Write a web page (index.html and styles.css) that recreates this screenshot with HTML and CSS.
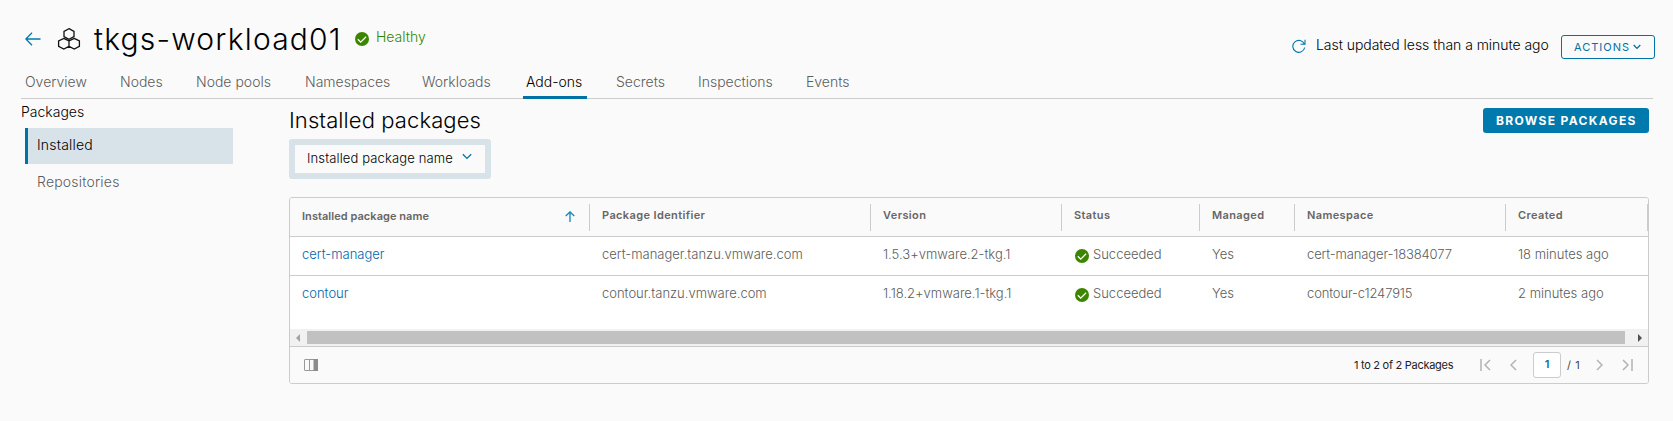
FILE: index.html
```html
<!DOCTYPE html>
<html lang="en">
<head>
<meta charset="utf-8">
<title>tkgs-workload01</title>
<link rel="stylesheet" href="styles.css">
</head>
<body>
<svg width="0" height="0" class="defs">
  <symbol id="ok" viewBox="0 0 14 14"><circle cx="7" cy="7" r="7" fill="#3c8500"/><path d="M2.8 7.3l2.900 2.800 5.400-5.300" fill="none" stroke="#fff" stroke-width="1.3"/></symbol>
</svg>
<header class="header">
  <svg class="back" width="16" height="14" viewBox="0 0 16 14"><path d="M15.500 7H1M7 .8L.9 7 7 13.200" /></svg>
  <svg class="cluster" width="24" height="24" viewBox="0 0 24 24"><path d="M12 1.700l5 2.600v5.400l-5 2.600-5-2.600V4.300z M6.800 11.400l5.200 2.600v5.400l-5.200 2.600-5.200-2.600V14z M17.200 11.400l5.200 2.600v5.400l-5.200 2.600-5.200-2.600V14z"/></svg>
  <h1 class="title">tkgs-workload01</h1>
  <svg class="health-icon" width="14" height="14"><use href="#ok"/></svg>
  <span class="health">Healthy</span>
  <div class="header-right">
    <svg class="refresh" width="14" height="14" viewBox="0 0 14 14"><path d="M12.400 5.200A6 6 0 1 0 12.700 8.500M13 .7v4.500H8.500"/></svg>
    <span class="updated">Last updated less than a minute ago</span>
    <button class="actions"><span>ACTIONS</span><svg width="8" height="6" viewBox="0 0 8 6"><path d="M.7 1L4 4.400 7.300 1"/></svg></button>
  </div>
</header>
<nav class="tabs">
  <a class="t1">Overview</a><a class="t2">Nodes</a><a class="t3">Node pools</a><a class="t4">Namespaces</a><a class="t5">Workloads</a><a class="t6 active">Add-ons</a><a class="t7">Secrets</a><a class="t8">Inspections</a><a class="t9">Events</a>
</nav>
<div class="content">
  <aside class="side">
    <div class="side-title">Packages</div>
    <a class="side-link current">Installed</a>
    <a class="side-link repos">Repositories</a>
  </aside>
  <main class="main">
    <div class="main-top">
      <div>
        <h2 class="subtitle">Installed packages</h2>
        <div class="filter"><span>Installed package name</span><svg width="10" height="7" viewBox="0 0 10 7"><path d="M.8 1.200L5 5.400 9.200 1.200"/></svg></div>
      </div>
      <button class="browse">BROWSE PACKAGES</button>
    </div>
    <section class="grid">
      <div class="row head">
        <div class="sorted"><span>Installed package name</span><svg width="10" height="11" viewBox="0 0 10 11"><path d="M5 11V1M.7 5L5 .9 9.300 5"/></svg></div>
        <div>Package Identifier</div><div>Version</div><div>Status</div><div>Managed</div><div>Namespace</div><div>Created</div>
      </div>
      <div class="row">
        <div><a class="link">cert-manager</a></div><div>cert-manager.tanzu.vmware.com</div><div class="version">1.5.3+vmware.2-tkg.1</div><div class="status"><svg width="14" height="14"><use href="#ok"/></svg>Succeeded</div><div>Yes</div><div class="ns">cert-manager-18384077</div><div>18 minutes ago</div>
      </div>
      <div class="row last">
        <div><a class="link">contour</a></div><div>contour.tanzu.vmware.com</div><div class="version">1.18.2+vmware.1-tkg.1</div><div class="status"><svg width="14" height="14"><use href="#ok"/></svg>Succeeded</div><div>Yes</div><div class="ns">contour-c1247915</div><div>2 minutes ago</div>
      </div>
      <div class="scroll">
        <svg width="17" height="17" viewBox="0 0 17 17"><path d="M10 5v8L6 9z" fill="#a3a3a3"/></svg>
        <div class="thumb"></div>
        <svg width="23" height="17" viewBox="0 0 23 17"><path d="M13 5v8l4-4z" fill="#505050"/></svg>
      </div>
      <footer class="foot">
        <svg class="cols" width="14" height="12" viewBox="0 0 14 12"><rect x=".5" y=".5" width="13" height="11" rx=".5" fill="#fafafa" stroke="#999"/><path d="M5.500 0v12" stroke="#999"/><path d="M9.500 0H14v12H9.500z" fill="#8c8c8c"/></svg>
        <span class="count">1 to 2 of 2 Packages</span>
        <svg class="first" width="11" height="12" viewBox="0 0 11 12"><path d="M1 0v12M10 1L5 6l5 5"/></svg>
        <svg class="prev" width="7" height="12" viewBox="0 0 7 12"><path d="M6 1L1 6l5 5"/></svg>
        <span class="page">1</span>
        <span class="pages">/ 1</span>
        <svg class="next" width="7" height="12" viewBox="0 0 7 12"><path d="M1 1l5 5-5 5"/></svg>
        <svg class="end" width="11" height="12" viewBox="0 0 11 12"><path d="M10 0v12M1 1l5 5-5 5"/></svg>
      </footer>
    </section>
  </main>
</div>
</body>
</html>
```
FILE: styles.css
```css
* { box-sizing: border-box; }
body { margin: 0; height: 421px; overflow: hidden; background: #fafafa; color: #000; font-family: Inter, "Open Sans", sans-serif; font-size: 14px; font-weight: 300; }
svg { display: block; flex: none; fill: none; }
.defs { position: absolute; }
h1, h2 { margin: 0; font-weight: 300; }
button { font-family: inherit; white-space: nowrap; }
.header { display: flex; height: 68px; padding: 0 18px 0 25px; white-space: nowrap; }
.back { margin-top: 32px; stroke: #0079ad; stroke-width: 1.3; }
.cluster { margin: 27px 0 0 16px; stroke: #111; stroke-width: 1.3; }
.title { width: 261px; margin: 19px 0 0 13px; font-size: 30px; line-height: 40px; letter-spacing: 1.2px; }
.health-icon { margin-top: 32px; }
.health { margin: 27px 0 0 7px; line-height: 20px; color: #318700; }
.header-right { display: flex; margin-left: auto; }
.refresh { margin: 39px 10px 0 0; stroke: #0079ad; stroke-width: 1.1; }
.updated { width: 245px; margin-top: 35px; line-height: 20px; letter-spacing: -.05px; }
.actions { display: flex; align-items: center; width: 94px; height: 24px; margin-top: 35px; padding: 0 0 0 12px; border: 1px solid #0072a3; border-radius: 3px; background: none; color: #0072a3; font-size: 11px; font-weight: 400; letter-spacing: 1px; }
.actions span { width: 59px; text-align: left; }
.actions svg, .filter svg { stroke: #0072a3; stroke-width: 1.3; }
.tabs { display: flex; height: 31px; margin: 0 20px 0 21px; border-bottom: 1px solid #ccc; color: #5c5c5c; white-space: nowrap; }
.tabs a { flex: none; height: 31px; padding: 4px 3px 0 4px; line-height: 20px; }
.tabs .active { border-bottom: 3px solid #0072a3; color: #000; padding-left: 3px; }
.t1 { width: 95px; } .t2 { width: 76px; } .t3 { width: 109px; } .t4 { width: 117px; } .t5 { width: 105px; } .t6 { width: 64px; margin-right: 25px; } .t7 { width: 82px; } .t8 { width: 108px; } .t9 { width: 60px; }
.content { display: flex; padding-left: 21px; }
.side { width: 268px; }
.side-title { height: 29px; padding-top: 3px; line-height: 20px; }
.side-link { display: block; width: 208px; height: 36px; margin-left: 4px; padding: 7px 0 0 12px; line-height: 20px; letter-spacing: .2px; color: #5c5c5c; }
.side-link.current { padding-left: 9px; border-left: 3px solid #0072a3; background: #d8e3e9; color: #000; }
.side-link.repos { padding-top: 8px; }
.main { width: 1360px; }
.main-top { display: flex; justify-content: space-between; height: 98px; }
.subtitle { height: 40px; padding-top: 7px; font-size: 22px; line-height: 28px; letter-spacing: .1px; white-space: nowrap; }
.filter { display: flex; width: 202px; height: 40px; padding: 8px 0 0 12px; border: 6px solid #d8e3e9; border-radius: 3px; font-size: 13px; font-weight: 300; line-height: 11px; letter-spacing: .13px; white-space: nowrap; }
.filter span { width: 155px; }
.browse { width: 166px; height: 25px; margin-top: 9px; padding: 0 0 0 13px; border: 0; border-radius: 3px; background: #0079ad; color: #fff; font-size: 12px; font-weight: 700; letter-spacing: 1.35px; text-align: left; }
.grid { height: 187px; border: 1px solid #ccc; border-radius: 3px; background: #fff; overflow: hidden; }
.row { display: grid; grid-template-columns: 300px 281px 191px 138px 95px 211px 142px; height: 39px; border-bottom: 1px solid #ccc; color: #5c5c5c; font-size: 13px; white-space: nowrap; }
.row > div { padding: 7px 0 0 12px; line-height: 20px; }
.row.last { height: 53px; border: 0; }
.row.head { background: #fafafa; color: #666; font-size: 11px; font-weight: 600; }
.row.head > div { height: 27px; margin-top: 6px; padding-top: 1px; border-right: 1px solid #ccc; letter-spacing: .38px; }
.row.head .sorted { display: flex; padding-top: 2px; letter-spacing: .05px; }
.sorted span { width: 263px; }
.sorted svg { margin: 5px 0 0 0; stroke: #2389bd; stroke-width: 1.4; }
.link { color: #0065ab; }
.row .status { display: flex; }
.ns { letter-spacing: -.13px; }
.status svg { margin: 5px 4px 0 1px; }
.scroll { display: flex; height: 17px; background: #f1f1f1; }
.thumb { flex: 1; height: 13px; margin-top: 2px; background: #c1c1c1; }
.foot { display: flex; height: 38px; padding-left: 14px; border-top: 1px solid #ccc; background: #fafafa; font-size: 11px; font-weight: 400; white-space: nowrap; }
.foot svg { margin-top: 12px; stroke: #b3b3b3; stroke-width: 1.5; }
.foot .cols { stroke: none; stroke-width: 1; }
.count { width: 126px; margin: 8px 0 0 1036px; line-height: 20px; letter-spacing: -.28px; color: #222; }
.foot .prev { margin-left: 19px; }
.page { width: 28px; height: 26px; margin: 5px 6px 0 16px; border: 1px solid #ccc; border-radius: 3px; background: #fff; color: #0072a3; font-weight: 600; line-height: 23px; text-align: center; }
.pages { width: 29px; margin-top: 8px; line-height: 20px; letter-spacing: .6px; color: #444; }
.foot .end { margin-left: 19px; }
```
